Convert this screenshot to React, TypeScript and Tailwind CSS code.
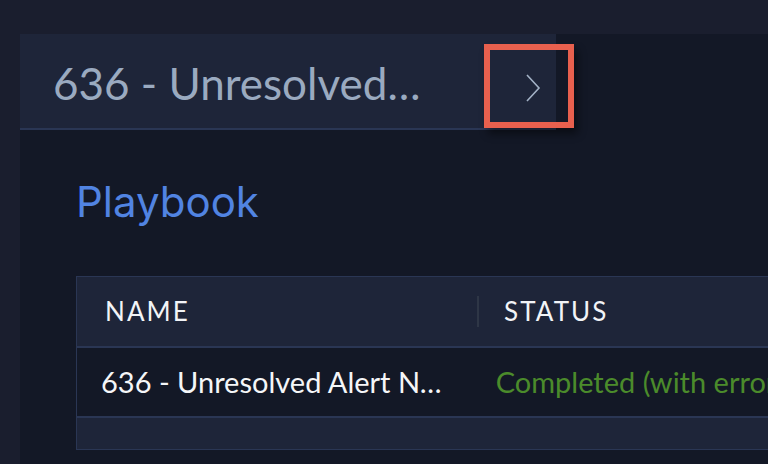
import React from "react";

const rows = [
  {
    name: "636 - Unresolved Alert Notification Workflow",
    status: "Completed (with errors)",
  },
];

function Chevron() {
  return (
    <svg width="16" height="30" viewBox="0 0 16 30" fill="none" className="mt-[10px]">
      <polyline
        points="2,2 14,15 2,28"
        stroke="#a3b2c6"
        strokeWidth="1.6"
        strokeLinejoin="miter"
      />
    </svg>
  );
}

export default function App() {
  return (
    <div className="relative h-[464px] w-[768px] overflow-hidden bg-[#1a1e2e] pl-[20px] pt-[34px] font-['Lato',sans-serif]">
      <div className="h-full overflow-hidden bg-[#131826]">
        <div className="flex h-[96px] w-[536px] items-center border-b-2 border-[#2a3654] bg-[#1e2539] pl-[33px] pt-[4px]">
          <h2 className="w-[376px] truncate text-[44px] leading-none text-[#9aaac0]">
            636 - Unresolved Alert Notification
          </h2>
          <div className="ml-[96px] flex">
            <Chevron />
          </div>
        </div>

        <div className="pl-[56px] pt-[51px]">
          <h1 className="font-['Inter',sans-serif] text-[42px] leading-none text-[#5184e2]">
            Playbook
          </h1>

          <div className="mt-[53px] w-[720px] border-l border-t border-[#2a3654]">
            <div className="flex h-[71px] items-center border-b-2 border-[#2a3654] bg-[#1e2539] text-[26px] tracking-[0.08em] text-[#f2f4f7]">
              <div className="w-[400px] pl-[28px]">NAME</div>
              <span className="h-[31px] w-[2px] bg-[#2e3646]" />
              <div className="pl-[25px]">STATUS</div>
            </div>
            {rows.map((r) => (
              <div
                key={r.name}
                className="flex h-[70px] items-center border-b-2 border-[#2a3654] bg-[#131826] text-[29px]"
              >
                <div className="w-[400px] truncate px-6 text-[#f5f6f8]">{r.name}</div>
                <div className="whitespace-nowrap pl-6 text-[#4b8b2b]">{r.status}</div>
              </div>
            ))}
            <div className="h-[32px] border-b border-[#2a3654] bg-[#1e2539]" />
          </div>
        </div>
      </div>

      {/* annotation box around the expand button */}
      <div className="absolute left-[484px] top-[44px] h-[84px] w-[90px] border-[6px] border-[#e8604e] shadow-[4px_6px_8px_rgba(0,0,0,0.45)]" />
    </div>
  );
}
